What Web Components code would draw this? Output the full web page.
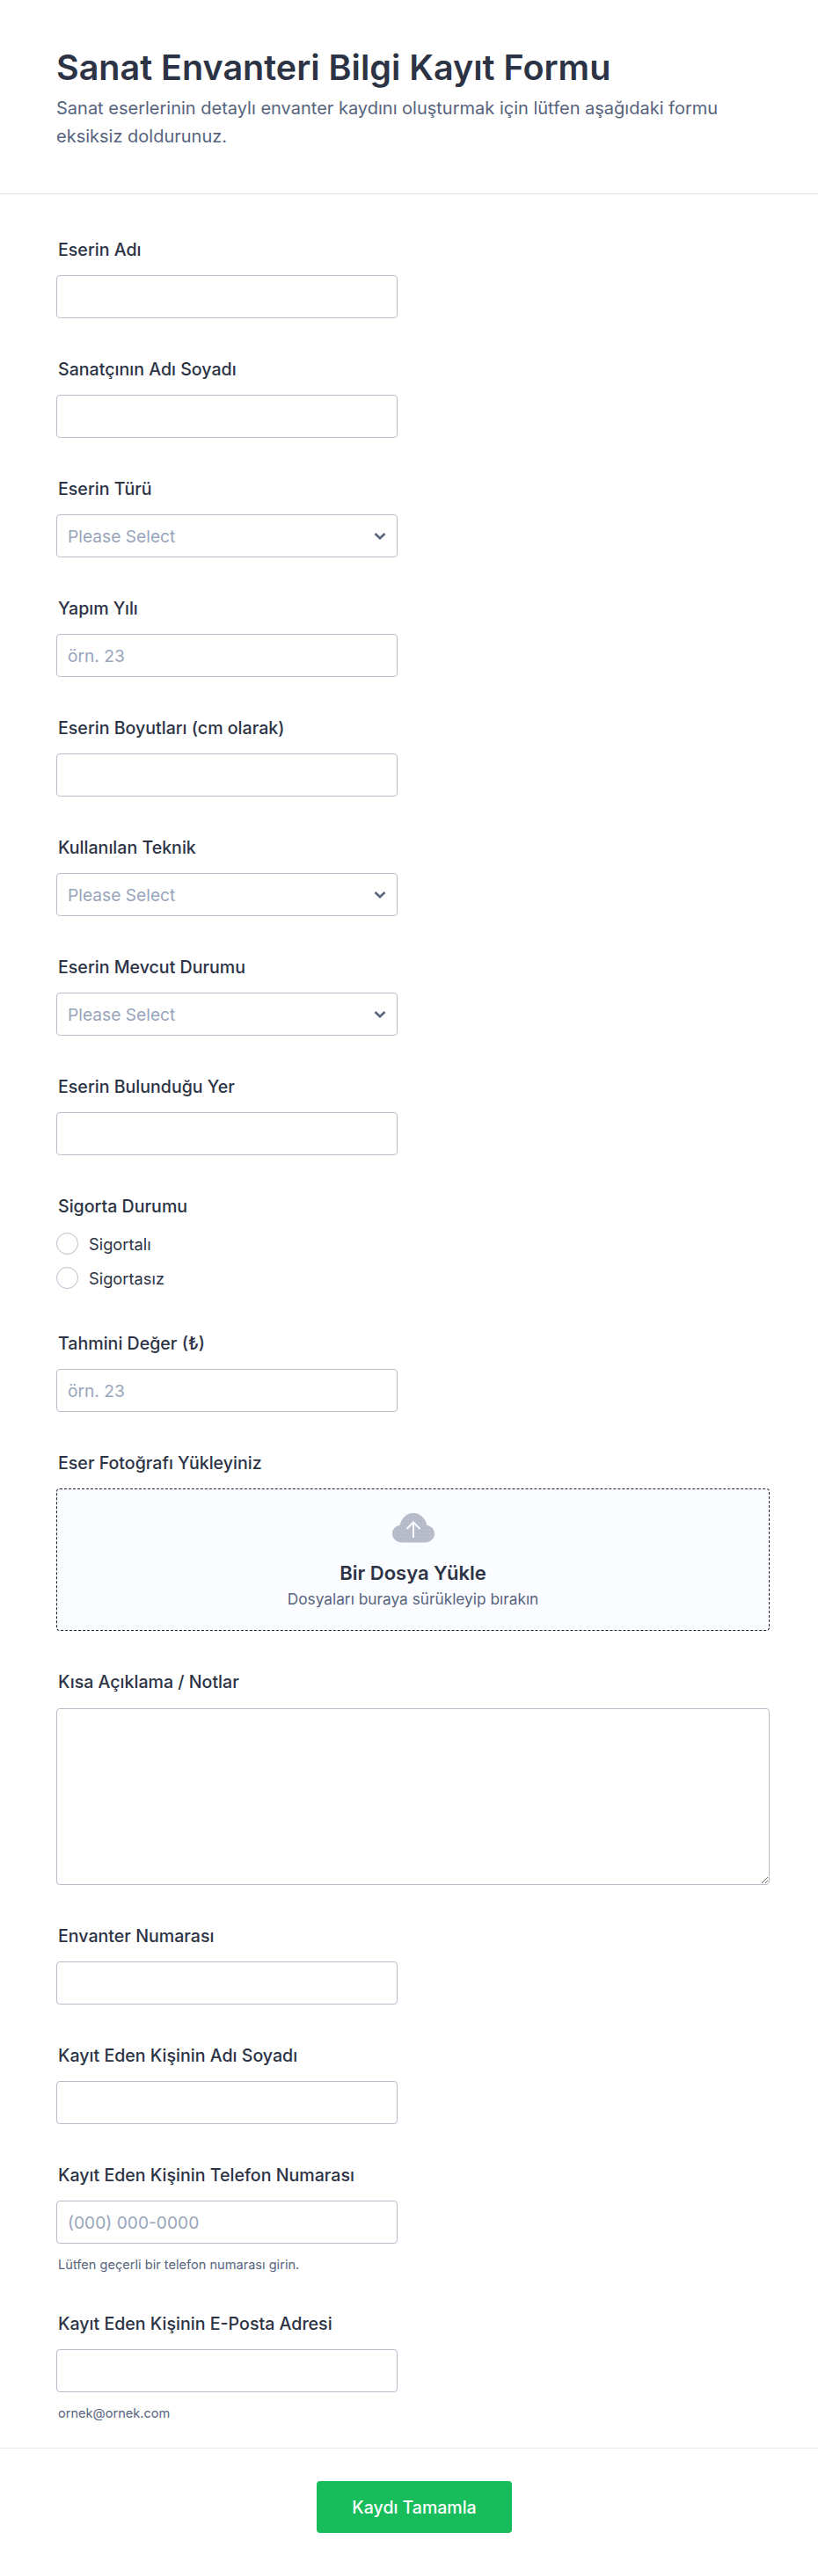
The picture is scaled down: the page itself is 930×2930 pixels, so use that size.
<!DOCTYPE html>
<html lang="tr">
<head>
<meta charset="utf-8">
<title>Sanat Envanteri Bilgi Kayıt Formu</title>
<style>
    html, body { margin: 0; background: #fff; }
    body { font-family: Inter, "Noto Sans", sans-serif; color: #2c3345; }
</style>
</head>
<body>
<form-page>
    <form-header slot="header" title="Sanat Envanteri Bilgi Kayıt Formu">Sanat eserlerinin detaylı envanter kaydını oluşturmak için lütfen aşağıdaki formu eksiksiz doldurunuz.</form-header>
    <text-field label="Eserin Adı"></text-field>
    <text-field label="Sanatçının Adı Soyadı"></text-field>
    <select-field label="Eserin Türü"></select-field>
    <text-field label="Yapım Yılı" placeholder="örn. 23"></text-field>
    <text-field label="Eserin Boyutları (cm olarak)"></text-field>
    <select-field label="Kullanılan Teknik"></select-field>
    <select-field label="Eserin Mevcut Durumu"></select-field>
    <text-field label="Eserin Bulunduğu Yer"></text-field>
    <radio-field label="Sigorta Durumu" options="Sigortalı|Sigortasız"></radio-field>
    <text-field label="Tahmini Değer (₺)" placeholder="örn. 23"></text-field>
    <upload-field label="Eser Fotoğrafı Yükleyiniz"></upload-field>
    <area-field label="Kısa Açıklama / Notlar"></area-field>
    <text-field label="Envanter Numarası"></text-field>
    <text-field label="Kayıt Eden Kişinin Adı Soyadı"></text-field>
    <text-field label="Kayıt Eden Kişinin Telefon Numarası" placeholder="(000) 000-0000" help="Lütfen geçerli bir telefon numarası girin."></text-field>
    <text-field label="Kayıt Eden Kişinin E-Posta Adresi" help="ornek@ornek.com" style="margin-bottom: 30px"></text-field>
    <submit-bar slot="footer">Kaydı Tamamla</submit-bar>
</form-page>

<script>
// ortak alan stilleri, her shadow root'a ayrı ayrı basılıyor
const fieldCss = `
    :host { display: block; margin-bottom: 46px; }
    .label { font-size: 19.6px; line-height: 24px; font-weight: 500; color: #2c3345; padding-left: 2px; margin-bottom: 17px; }
    .box {
        box-sizing: border-box; width: 388px; height: 49px;
        border: 1px solid #b8bdc9; border-radius: 4px; background: #fff;
    }
    .ph { font-size: 19.2px; color: #98a5ba; }
    .help { font-size: 14.6px; line-height: 18px; color: #57647e; padding-left: 2px; margin-top: 15px; }
`;

class FormPage extends HTMLElement {
    constructor() {
        super();
        this.attachShadow({ mode: 'open' });
        this.shadowRoot.innerHTML = `
            <style>
                :host { display: block; width: 930px; height: 2930px; overflow: hidden; }
                .fields { padding: 51px 55px 0 64px; }
            </style>
            <slot name="header"></slot>
            <div class="fields"><slot></slot></div>
            <slot name="footer"></slot>
        `;
    }
}
customElements.define('form-page', FormPage);

class FormHeader extends HTMLElement {
    constructor() {
        super();
        this.attachShadow({ mode: 'open' });
    }

    connectedCallback() {
        this.shadowRoot.innerHTML = `
            <style>
                :host { display: block; box-sizing: border-box; height: 221px; padding: 53px 64px 0; border-bottom: 1px solid #e3e5ec; }
                h1 { margin: 0; font-size: 39.5px; line-height: 48px; font-weight: 600; color: #2c3345; }
                p { margin: 6px 0 0; width: 780px; font-size: 20px; line-height: 32px; color: #57647e; }
            </style>
            <h1>${this.getAttribute('title')}</h1>
            <p><slot></slot></p>
        `;
    }
}
customElements.define('form-header', FormHeader);

class TextField extends HTMLElement {
    constructor() {
        super();
        this.attachShadow({ mode: 'open' });
    }

    connectedCallback() {
        const ph = this.getAttribute('placeholder');
        const help = this.getAttribute('help');
        this.shadowRoot.innerHTML = `
            <style>
                ${fieldCss}
                .box { display: grid; align-items: center; }
                .box > * { grid-area: 1 / 1; }
                input { box-sizing: border-box; width: 100%; height: 100%; border: 0; padding: 0 12px; background: none; outline: none; font: 19.2px Inter, sans-serif; color: #2c3345; }
                .ph { padding-left: 12px; pointer-events: none; }
            </style>
            <div class="label">${this.getAttribute('label')}</div>
            <div class="box">
                <input type="text">
                ${ph ? `<span class="ph">${ph}</span>` : ''}
            </div>
            ${help ? `<div class="help">${help}</div>` : ''}
        `;
        // placeholder yazı girilince gizlensin
        const input = this.shadowRoot.querySelector('input');
        const phEl = this.shadowRoot.querySelector('.ph');
        if (phEl) {
            input.addEventListener('input', () => { phEl.hidden = input.value !== ''; });
        }
    }
}
customElements.define('text-field', TextField);

class SelectField extends HTMLElement {
    constructor() {
        super();
        this.attachShadow({ mode: 'open' });
    }

    connectedCallback() {
        this.shadowRoot.innerHTML = `
            <style>
                ${fieldCss}
                .box { display: flex; align-items: center; justify-content: space-between; padding: 0 12px; }
                svg { display: block; }
            </style>
            <div class="label">${this.getAttribute('label')}</div>
            <div class="box" role="combobox">
                <span class="ph">Please Select</span>
                <svg width="14" height="10" viewBox="0 0 14 10" fill="none" stroke="#57647e" stroke-width="2.6"><path d="M1.500 2 7 7.200 12.500 2"/></svg>
            </div>
        `;
    }
}
customElements.define('select-field', SelectField);

class RadioField extends HTMLElement {
    constructor() {
        super();
        this.attachShadow({ mode: 'open' });
    }

    connectedCallback() {
        const opts = this.getAttribute('options').split('|');
        this.shadowRoot.innerHTML = `
            <style>
                ${fieldCss}
                :host { margin-bottom: 50px; }
                .label { margin-bottom: 18px; }
                .opts { display: flex; flex-direction: column; gap: 14px; }
                label { display: flex; align-items: center; gap: 12px; height: 25px; font-size: 18.3px; color: #2c3345; }
                i { box-sizing: border-box; width: 25px; height: 25px; border: 1px solid #b8bdc9; border-radius: 50%; background: #fff; }
            </style>
            <div class="label">${this.getAttribute('label')}</div>
            <div class="opts">
                ${opts.map(o => `<label><i></i>${o}</label>`).join('')}
            </div>
        `;
    }
}
customElements.define('radio-field', RadioField);

class UploadField extends HTMLElement {
    constructor() {
        super();
        this.attachShadow({ mode: 'open' });
    }

    connectedCallback() {
        this.shadowRoot.innerHTML = `
            <style>
                ${fieldCss}
                .drop {
                    box-sizing: border-box; width: 811px; height: 162px; padding-top: 27px;
                    display: flex; flex-direction: column; align-items: center;
                    border: 1px dashed #1f2536; border-radius: 4px; background: #fbfcff;
                }
                svg { display: block; }
                b { margin-top: 20px; font-size: 22px; line-height: 28px; font-weight: 600; color: #2c3345; }
                span { margin-top: 6px; font-size: 17.3px; line-height: 20px; color: #57647e; }
            </style>
            <div class="label">${this.getAttribute('label')}</div>
            <div class="drop">
                <svg width="48" height="34" viewBox="0 0 48 34">
                    <defs>
                        <pattern id="dots" width="4" height="4" patternUnits="userSpaceOnUse">
                            <rect width="4" height="4" fill="#b8bdc9"/>
                            <circle cx="1" cy="1" r=".5" fill="#97a9c9"/>
                        </pattern>
                    </defs>
                    <path fill="url(#dots)" d="M11 33.500C4.800 33.500 0 29.200 0 23.600c0-5 3.600-9 8.600-9.800C10.300 5.800 16.300 0 24 0s13.700 5.800 15.400 13.800c5 .8 8.600 4.800 8.600 9.800 0 5.600-4.800 9.900-11 9.900z"/>
                    <path fill="none" stroke="#fbfcff" stroke-width="2" d="M24 28V11M16.500 18 24 10.500 31.500 18"/>
                </svg>
                <b>Bir Dosya Yükle</b>
                <span>Dosyaları buraya sürükleyip bırakın</span>
            </div>
        `;
    }
}
customElements.define('upload-field', UploadField);

class AreaField extends HTMLElement {
    constructor() {
        super();
        this.attachShadow({ mode: 'open' });
    }

    connectedCallback() {
        this.shadowRoot.innerHTML = `
            <style>
                ${fieldCss}
                .label { margin-bottom: 18px; }
                textarea { display: block; box-sizing: border-box; width: 811px; height: 201px; padding: 8px 12px; border: 1px solid #b8bdc9; border-radius: 4px; outline: none; font: 19.2px Inter, sans-serif; color: #2c3345; }
            </style>
            <div class="label">${this.getAttribute('label')}</div>
            <textarea></textarea>
        `;
    }
}
customElements.define('area-field', AreaField);

class SubmitBar extends HTMLElement {
    constructor() {
        super();
        this.attachShadow({ mode: 'open' });
        this.shadowRoot.innerHTML = `
            <style>
                :host { display: flex; justify-content: center; box-sizing: border-box; height: 148px; padding: 37px 0 0 12px; border-top: 1px solid #e9ebf2; }
                button { width: 222px; height: 59px; border: 0; border-radius: 4px; background: #18bd5b; color: #fff; font: 500 19.5px Inter, sans-serif; cursor: pointer; }
            </style>
            <button type="submit"><slot></slot></button>
        `;
    }
}
customElements.define('submit-bar', SubmitBar);
</script>
</body>
</html>
